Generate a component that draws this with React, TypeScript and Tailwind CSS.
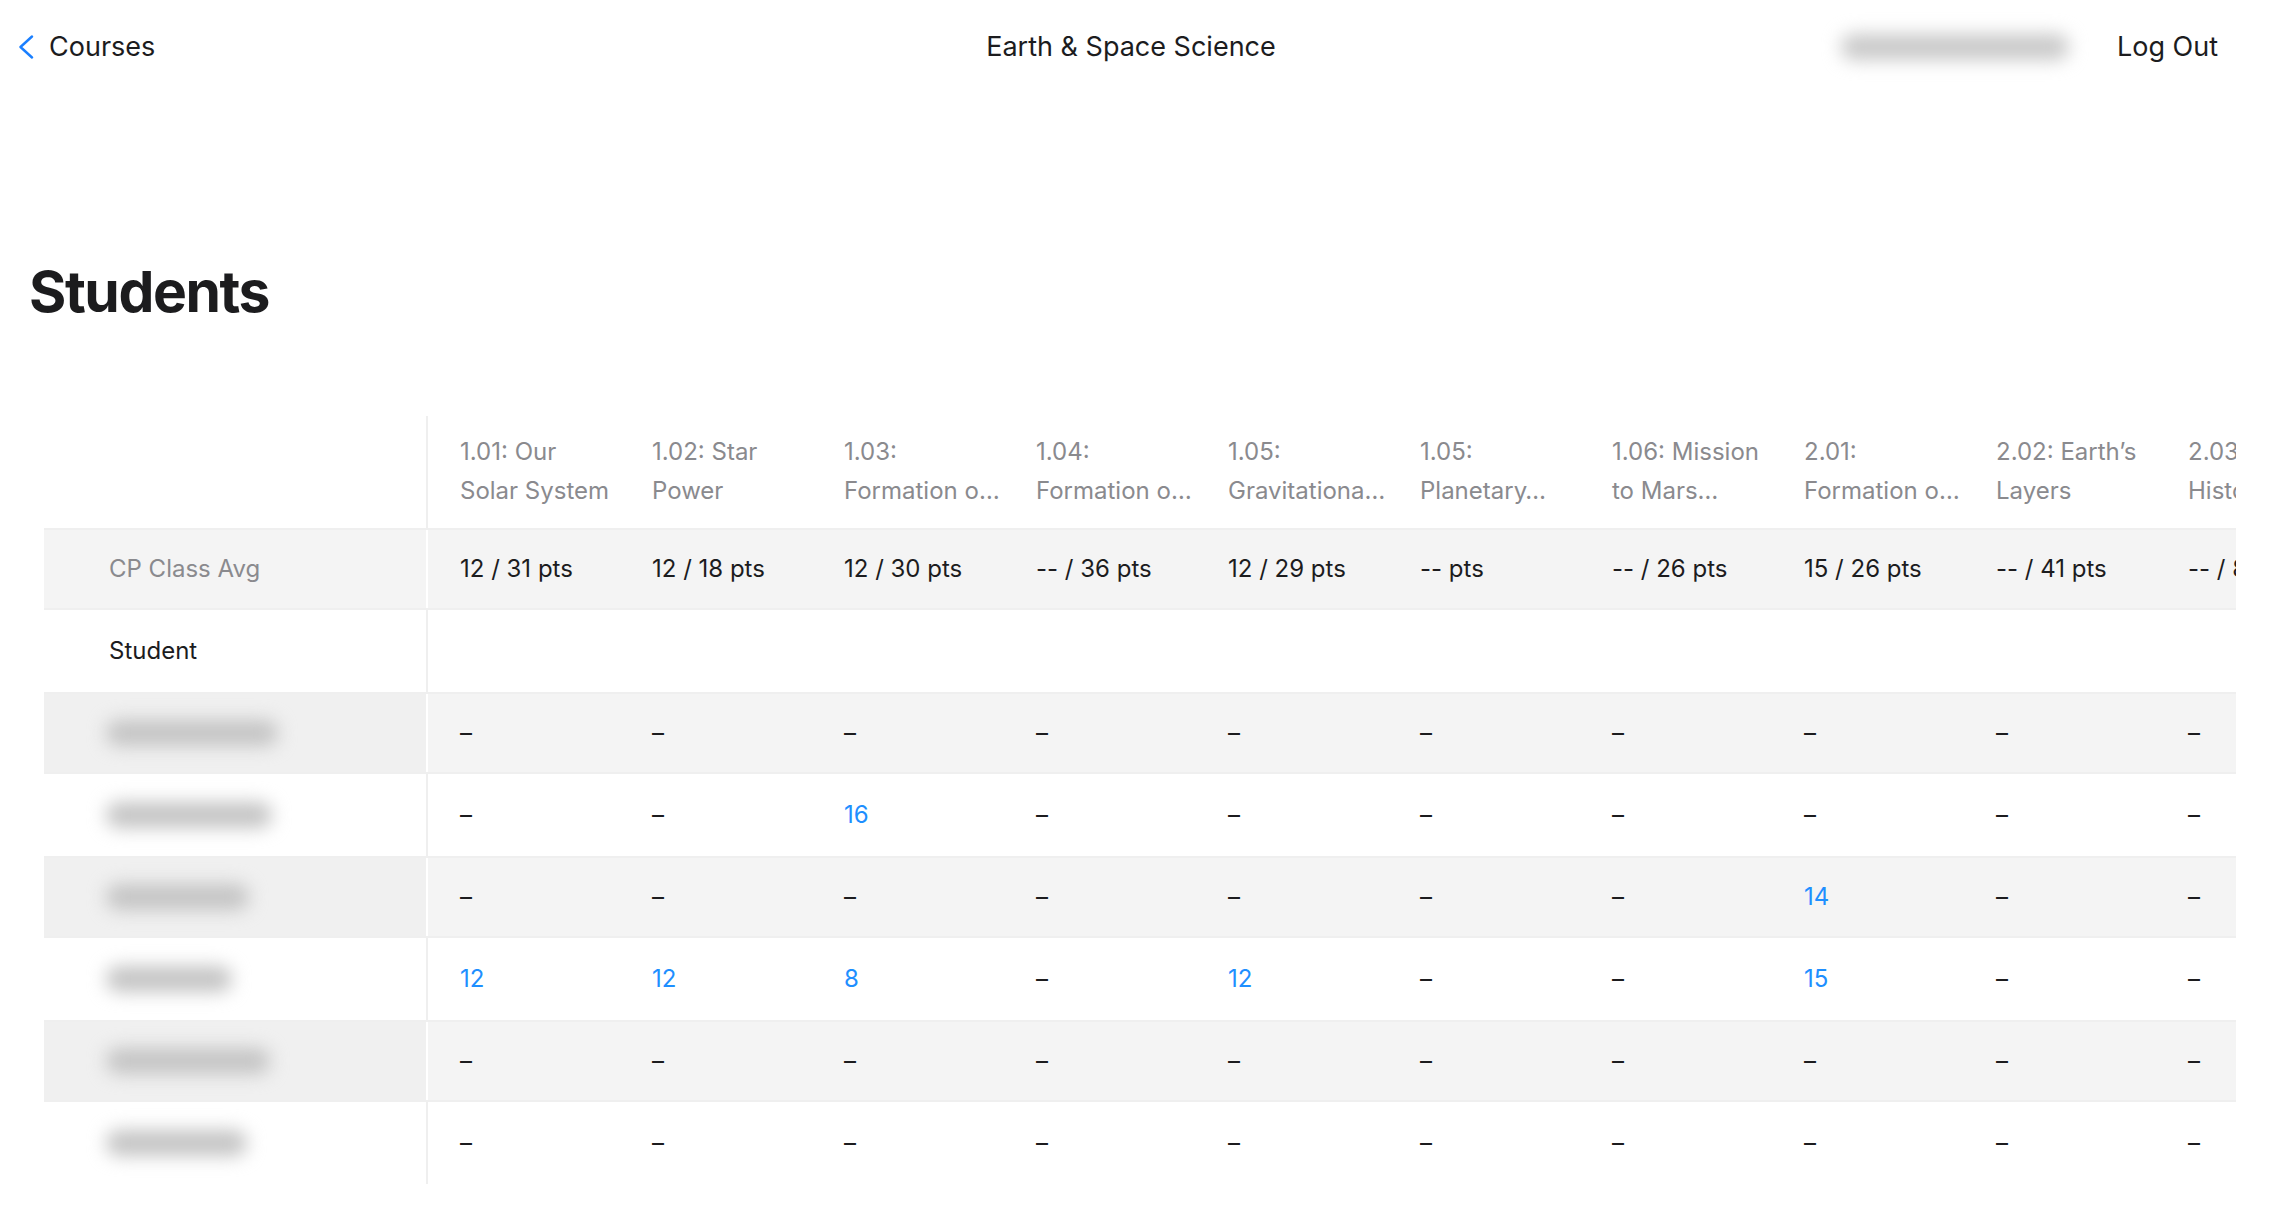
import React from 'react'

type Column = { l1: string; l2: string; avg: string }

const columns: Column[] = [
  { l1: '1.01: Our', l2: 'Solar System', avg: '12 / 31 pts' },
  { l1: '1.02: Star', l2: 'Power', avg: '12 / 18 pts' },
  { l1: '1.03:', l2: 'Formation o…', avg: '12 / 30 pts' },
  { l1: '1.04:', l2: 'Formation o…', avg: '-- / 36 pts' },
  { l1: '1.05:', l2: 'Gravitationa…', avg: '12 / 29 pts' },
  { l1: '1.05:', l2: 'Planetary…', avg: '-- pts' },
  { l1: '1.06: Mission', l2: 'to Mars…', avg: '-- / 26 pts' },
  { l1: '2.01:', l2: 'Formation o…', avg: '15 / 26 pts' },
  { l1: '2.02: Earth’s', l2: 'Layers', avg: '-- / 41 pts' },
  { l1: '2.03:', l2: 'History of…', avg: '-- / 80 pts' },
]

// scores per student, null = not submitted
const students: { blur: number; scores: (number | null)[] }[] = [
  { blur: 172, scores: [null, null, null, null, null, null, null, null, null, null] },
  { blur: 166, scores: [null, null, 16, null, null, null, null, null, null, null] },
  { blur: 143, scores: [null, null, null, null, null, null, null, 14, null, null] },
  { blur: 126, scores: [12, 12, 8, null, 12, null, null, 15, null, null] },
  { blur: 164, scores: [null, null, null, null, null, null, null, null, null, null] },
  { blur: 141, scores: [null, null, null, null, null, null, null, null, null, null] },
]

function ChevronLeft() {
  return (
    <svg width="16" height="24" viewBox="0 0 16 24" fill="none">
      <path d="M14 1.5L2.5 12L14 22.5" stroke="#1a7fff" strokeWidth="2.4" strokeLinecap="round" strokeLinejoin="round" />
    </svg>
  )
}

export default function App() {
  return (
    <div className="min-h-screen bg-white text-[#1c1c1e]" style={{ fontFamily: 'Inter, "Noto Sans", sans-serif' }}>
      {/* Top bar */}
      <header className="grid h-[94px] grid-cols-[1fr_auto_1fr] items-center px-[18px] text-[27px]">
        <div className="flex items-center gap-[15px]">
          <ChevronLeft />
          <span>Courses</span>
        </div>
        <div className="mr-[14px]">Earth &amp; Space Science</div>
        <div className="mr-[40px] flex items-center justify-end gap-[48px]">
          <div className="h-[26px] w-[228px] rounded-full bg-[#c9c9c9] blur-[9px]" />
          <span>Log Out</span>
        </div>
      </header>

      <main>
        <h1 className="ml-[29px] mt-[169px] text-[57px] font-bold leading-none tracking-tight">Students</h1>

        <div className="ml-[44px] mr-[40px] mt-[96px] overflow-hidden text-[24px]">
          {/* Column headers */}
          <div className="flex h-[112px] w-max">
            <div className="w-[384px] shrink-0 border-r-2 border-[#efefef]" />
            {columns.map((c, i) => (
              <div key={i} className="w-[192px] shrink-0 pl-[32px] pt-[16px] leading-[39px] text-[#8a8a8e] whitespace-nowrap">
                <div>{c.l1}</div>
                <div>{c.l2}</div>
              </div>
            ))}
          </div>

          {/* Class average */}
          <div className="flex h-[82px] w-max border-y-2 border-[#efefef] bg-[#f4f4f4]">
            <div className="flex w-[384px] shrink-0 items-center border-r-2 border-white pl-[65px] text-[#8a8a8e]">
              CP Class Avg
            </div>
            {columns.map((c, i) => (
              <div key={i} className="flex w-[192px] shrink-0 items-center whitespace-nowrap pl-[32px]">
                {c.avg}
              </div>
            ))}
          </div>

          <div className="flex h-[82px] w-max">
            <div className="flex w-[384px] shrink-0 items-center border-r-2 border-[#efefef] pl-[65px]">Student</div>
            {columns.map((_, i) => (
              <div key={i} className="w-[192px] shrink-0" />
            ))}
          </div>

          {students.map((s, r) => {
            const gray = r % 2 === 0
            return (
              <div
                key={r}
                className={
                  gray
                    ? 'flex h-[82px] w-max border-y-2 border-[#efefef] bg-[#f4f4f4]'
                    : 'flex h-[82px] w-max bg-white'
                }
              >
                <div
                  className={
                    gray
                      ? 'flex w-[384px] shrink-0 items-center border-r-2 border-white bg-[#f0f0f0] pl-[62px]'
                      : 'flex w-[384px] shrink-0 items-center border-r-2 border-[#efefef] pl-[62px]'
                  }
                >
                  <div className="h-[26px] rounded-full bg-[#c4c4c4] blur-[9px]" style={{ width: s.blur }} />
                </div>
                {s.scores.map((v, i) => (
                  <div key={i} className="flex w-[192px] shrink-0 items-center pl-[32px]">
                    {v === null ? <span>–</span> : <span className="text-[#1e8fff]">{v}</span>}
                  </div>
                ))}
              </div>
            )
          })}
        </div>
      </main>
    </div>
  )
}
